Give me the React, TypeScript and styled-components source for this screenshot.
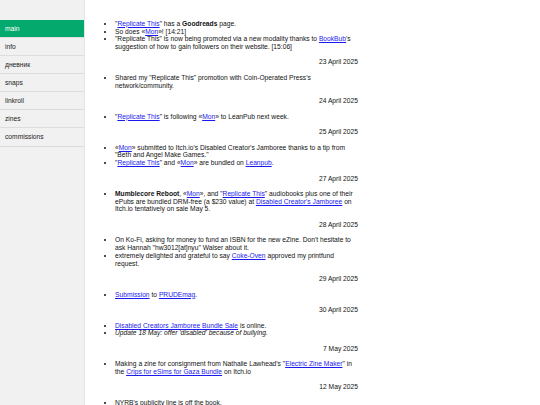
import type { ReactNode } from 'react';
import styled, { createGlobalStyle } from 'styled-components';

const GlobalStyle = createGlobalStyle`
    html, body {
        margin: 0;
        padding: 0;
        background: #fff;
    }
    body {
        font-family: "Liberation Sans", Arial, sans-serif;
        font-size: 6.7px;
        line-height: 7.7px;
        color: #111;
    }
`

const Page = styled.div`
    display: flex;
    align-items: stretch;
    min-height: 100vh;
`
const Sidebar = styled.nav`
    flex: 0 0 84px;
    background-color: #f1f1f1;
    border-right: 1px solid #e6e6e6;
    padding-top: 20px;
`
const NavList = styled.ul`
    list-style: none;
    margin: 0;
    padding: 0;
`
const NavItem = styled.li`
    border-bottom: 1px solid #dddddd;
`
const NavLink = styled.a<{ $active?: boolean }>`
    display: block;
    padding: 4.7px 5px;
    color: ${({$active}) => $active ? '#fff' : '#222'};
    background-color: ${({$active}) => $active ? '#04AA6D' : 'transparent'};
    text-decoration: none;
`
const Main = styled.main`
    flex: 1;
    padding: 12px 0 0 18px;
`
const Column = styled.div`
    width: 255px;
`
const Group = styled.section``
const EntryList = styled.ul`
    margin: 7.8px 0;
    padding-left: 12px;
    list-style: disc;
`
const EntryItem = styled.li``
const DateLine = styled.div`
    text-align: right;
`
const Link = styled.a`
    color: #1a1aee;
    text-decoration: underline;
`

const navItems = ['main', 'info', 'дневник', 'snaps', 'linkroll', 'zines', 'commissions']

type Entry = { items: ReactNode[]; date?: string }

const entries: Entry[] = [
    {
        items: [
            <>"<Link>Replicate This</Link>" has a <b>Goodreads</b> page.</>,
            <>So does «<Link>Mon</Link>»! [14:21]</>,
            <>"Replicate This" is now being promoted via a new modality thanks to <Link>BookBub</Link>'s suggestion of how to gain followers on their website. [15:06]</>,
        ],
        date: '23 April 2025',
    },
    {
        items: [<>Shared my "Replicate This" promotion with Coin-Operated Press's network/community.</>],
        date: '24 April 2025',
    },
    {
        items: [<>"<Link>Replicate This</Link>" is following «<Link>Mon</Link>» to LeanPub next week.</>],
        date: '25 April 2025',
    },
    {
        items: [
            <>«<Link>Mon</Link>» submitted to Itch.io's Disabled Creator's Jamboree thanks to a tip from "Beth and Angel Make Games."</>,
            <>"<Link>Replicate This</Link>" and «<Link>Mon</Link>» are bundled on <Link>Leanpub</Link>.</>,
        ],
        date: '27 April 2025',
    },
    {
        items: [
            <><b>Mumblecore Reboot</b>, «<Link>Mon</Link>», and "<Link>Replicate This</Link>" audiobooks plus one of their ePubs are bundled DRM-free (a $230 value) at <Link>Disabled Creator's Jamboree</Link> on Itch.io tentatively on sale May 5.</>,
        ],
        date: '28 April 2025',
    },
    {
        items: [
            <>On Ko-Fi, asking for money to fund an ISBN for the new eZine. Don't hesitate to ask Hannah "hw3012[at]nyu" Walser about it.</>,
            <>extremely delighted and grateful to say <Link>Coke-Oven</Link> approved my printfund request.</>,
        ],
        date: '29 April 2025',
    },
    {
        items: [<><Link>Submission</Link> to <Link>PRUDEmag</Link>.</>],
        date: '30 April 2025',
    },
    {
        items: [
            <><Link>Disabled Creators Jamboree Bundle Sale</Link> is online.</>,
            <i>Update 18 May: offer 'disabled' because of bullying.</i>,
        ],
        date: '7 May 2025',
    },
    {
        items: [
            <>Making a zine for consignment from Nathalie Lawhead's "<Link>Electric Zine Maker</Link>" in the <Link>Crips for eSims for Gaza Bundle</Link> on Itch.io</>,
        ],
        date: '12 May 2025',
    },
    {
        items: [<>NYRB's publicity line is off the book.</>],
    },
]

export default function App() {
    return (
        <>
            <GlobalStyle/>
            <Page>
                <Sidebar>
                    <NavList>
                        {navItems.map((el, i) => (
                            <NavItem key={i}>
                                <NavLink $active={i === 0}>{el}</NavLink>
                            </NavItem>
                        ))}
                    </NavList>
                </Sidebar>
                <Main>
                    <Column>
                        {entries.map((entry, i) => (
                            <Group key={i}>
                                <EntryList>
                                    {entry.items.map((item, j) => <EntryItem key={j}>{item}</EntryItem>)}
                                </EntryList>
                                {entry.date && <DateLine>{entry.date}</DateLine>}
                            </Group>
                        ))}
                    </Column>
                </Main>
            </Page>
        </>
    )
}
